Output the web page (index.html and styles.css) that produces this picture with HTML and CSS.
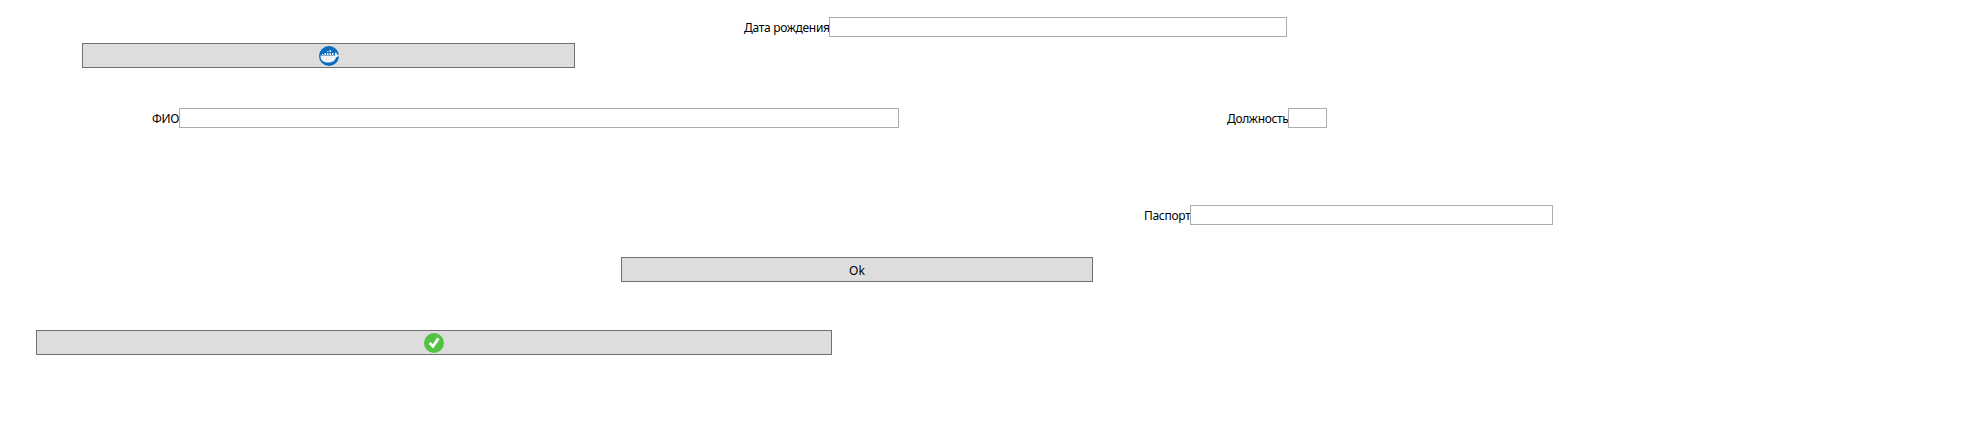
FILE: index.html
```html
<!DOCTYPE html>
<html lang="ru">
<head>
<meta charset="utf-8">
<title>Сотрудник</title>
<link rel="stylesheet" href="styles.css">
</head>
<body>
<form class="form">
  <div class="row birth">
    <label class="label" for="birth">Дата рождения</label><input class="input" id="birth" type="text">
  </div>
  <button class="button docker" type="button" aria-label="Docker">
    <svg class="icon" viewBox="0 0 20 20">
      <circle cx="10" cy="10" r="10" fill="#0b6bbf"/>
      <path d="M1.500 9.500h14.800c-.6-1.300-.3-2.300.4-3.200 1 .7 1.400 1.500 1.300 2.400.8-.1 1.500 0 2 .3-.1 1.400-1.400 2.200-3 2.200C16.300 14.600 13.600 16.600 9 16.600 4.300 16.600 1.200 14 1.500 9.500z" fill="#f1f2f3"/>
      <path d="M5.500 7h1.500v2H5.500zM8 7h1.500v2H8zM10.500 7H12v2h-1.500zM3 8h1.500v1H3zM10.500 4.300H12V6h-1.500zM8 5.200h1.500V6H8zM13 7h1.500v2H13z" fill="#f1f2f3"/>
    </svg>
  </button>
  <div class="row person">
    <label class="label name-label" for="name">ФИО</label><input class="input" id="name" type="text">
    <label class="label post-label" for="post">Должность</label><input class="input post" id="post" type="text">
  </div>
  <div class="row passport">
    <label class="label" for="passport">Паспорт</label><input class="input" id="passport" type="text">
  </div>
  <button class="button ok" type="button"><span class="caption">Ok</span></button>
  <button class="button confirm" type="button" aria-label="Подтвердить">
    <svg class="icon" viewBox="0 0 20 20">
      <circle cx="10" cy="10" r="10" fill="#53c244"/>
      <path d="M5.700 9.900l3.300 3.400 5.400-7.900" fill="none" stroke="#fff" stroke-width="2.800"/>
    </svg>
  </button>
</form>
</body>
</html>
```
FILE: styles.css
```css
body {
  margin: 0;
  background: #fff;
  color: #000;
  font: 12px/16px "Noto Sans", "Open Sans", sans-serif;
}

.form {
  display: flex;
  flex-direction: column;
  align-items: flex-start;
  box-sizing: border-box;
  height: 430px;
  padding-top: 17px;
}

.row {
  display: flex;
  height: 20px;
}

.label {
  flex: none;
  padding-top: 3px;
  letter-spacing: -0.3px;
  white-space: nowrap;
}

.input {
  box-sizing: border-box;
  height: 20px;
  margin: 0;
  padding: 0 2px;
  border: 1px solid #abadb3;
  background: #fff;
  font: inherit;
  outline: none;
}

.button {
  display: flex;
  align-items: center;
  justify-content: center;
  box-sizing: border-box;
  height: 25px;
  margin: 0;
  padding: 0;
  border: 1px solid #707070;
  border-radius: 0;
  background: #ddd;
  color: #000;
  font: inherit;
}

.icon {
  display: block;
  width: 20px;
  height: 20px;
}

.birth {
  margin-left: 744px;
}

.birth .label {
  width: 85px;
}

.birth .input {
  width: 458px;
}

.docker {
  width: 493px;
  margin: 6px 0 0 82px;
}

.person {
  margin: 40px 0 0 152px;
}

.person .name-label {
  width: 27px;
}

.person .input {
  width: 720px;
}

.person .post-label {
  width: 61px;
  margin-left: 328px;
  letter-spacing: -0.35px;
}

.person .post {
  width: 39px;
}

.passport {
  margin: 77px 0 0 1144px;
}

.passport .label {
  width: 46px;
}

.passport .input {
  width: 363px;
}

.ok {
  width: 472px;
  margin: 32px 0 0 621px;
}

.caption {
  padding-top: 2px;
}

.confirm {
  width: 796px;
  margin: 48px 0 0 36px;
}
```
